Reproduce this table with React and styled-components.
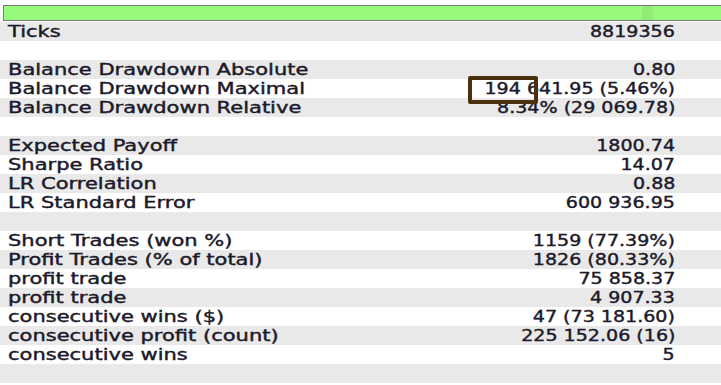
import React from "react";
import styled, { createGlobalStyle } from "styled-components";

const GlobalStyle = createGlobalStyle`
  body {
    margin: 0;
    background: #ffffff;
    overflow: hidden;
  }
`;

const rows = [
  ["Ticks", "8819356"],
  ["", ""],
  ["Balance Drawdown Absolute", "0.80"],
  ["Balance Drawdown Maximal", "194 641.95 (5.46%)", true],
  ["Balance Drawdown Relative", "8.34% (29 069.78)"],
  ["", ""],
  ["Expected Payoff", "1800.74"],
  ["Sharpe Ratio", "14.07"],
  ["LR Correlation", "0.88"],
  ["LR Standard Error", "600 936.95"],
  ["", ""],
  ["Short Trades (won %)", "1159 (77.39%)"],
  ["Profit Trades (% of total)", "1826 (80.33%)"],
  ["profit trade", "75 858.37"],
  ["profit trade", "4 907.33"],
  ["consecutive wins ($)", "47 (73 181.60)"],
  ["consecutive profit (count)", "225 152.06 (16)"],
  ["consecutive wins", "5"],
  ["", ""],
];

// 전체 화면
const App = () => {
  return (
    <Page>
      <GlobalStyle />
      <BarWrap>
        <GreenBar>
          <Tick />
        </GreenBar>
      </BarWrap>
      <Table>
        {rows.map(([label, value, marked], i) => (
          <Row key={i} shade={i % 2 === 0}>
            <Label>{label}</Label>
            <Value>{value}</Value>
            {marked && <Marker />}
          </Row>
        ))}
      </Table>
    </Page>
  );
};

export default App;

const Page = styled.div`
  width: 721px;
  height: 385px;
  display: flex;
  flex-direction: column;
  font-family: "DejaVu Sans", Verdana, sans-serif;
  overflow: hidden;
`;
const BarWrap = styled.div`
  height: 22px;
  padding: 5px 0 1px 3px;
  box-sizing: border-box;
`;
const GreenBar = styled.div`
  position: relative;
  height: 16px;
  box-sizing: border-box;
  background: #98fa7c;
  border: 1px solid #7a7a7a;
  border-right: none;
`;
const Tick = styled.div`
  position: absolute;
  left: 638px;
  top: 0;
  width: 11px;
  height: 100%;
  background: #91ec76;
`;
const Table = styled.div`
  display: flex;
  flex-direction: column;
`;
const Row = styled.div`
  position: relative;
  display: flex;
  align-items: center;
  justify-content: space-between;
  height: 19px;
  box-sizing: border-box;
  padding: 2px 46px 0 8px;
  background: ${(props) => (props.shade ? "#e9e9e9" : "#ffffff")};
  color: #1c1a2a;
  font-size: 15px;
  line-height: 17px;
  white-space: nowrap;
`;
const Label = styled.span`
  display: inline-block;
  transform: scaleX(1.4);
  transform-origin: left center;
  -webkit-text-stroke: 0.4px #1c1a2a;
`;
const Value = styled.span`
  display: inline-block;
  transform: scaleX(1.27);
  transform-origin: right center;
  -webkit-text-stroke: 0.4px #1c1a2a;
`;
const Marker = styled.span`
  position: absolute;
  z-index: 1;
  left: 468px;
  top: -3px;
  width: 70px;
  height: 28px;
  box-sizing: border-box;
  border: 4px solid #4b300f;
  border-radius: 2px;
`;
